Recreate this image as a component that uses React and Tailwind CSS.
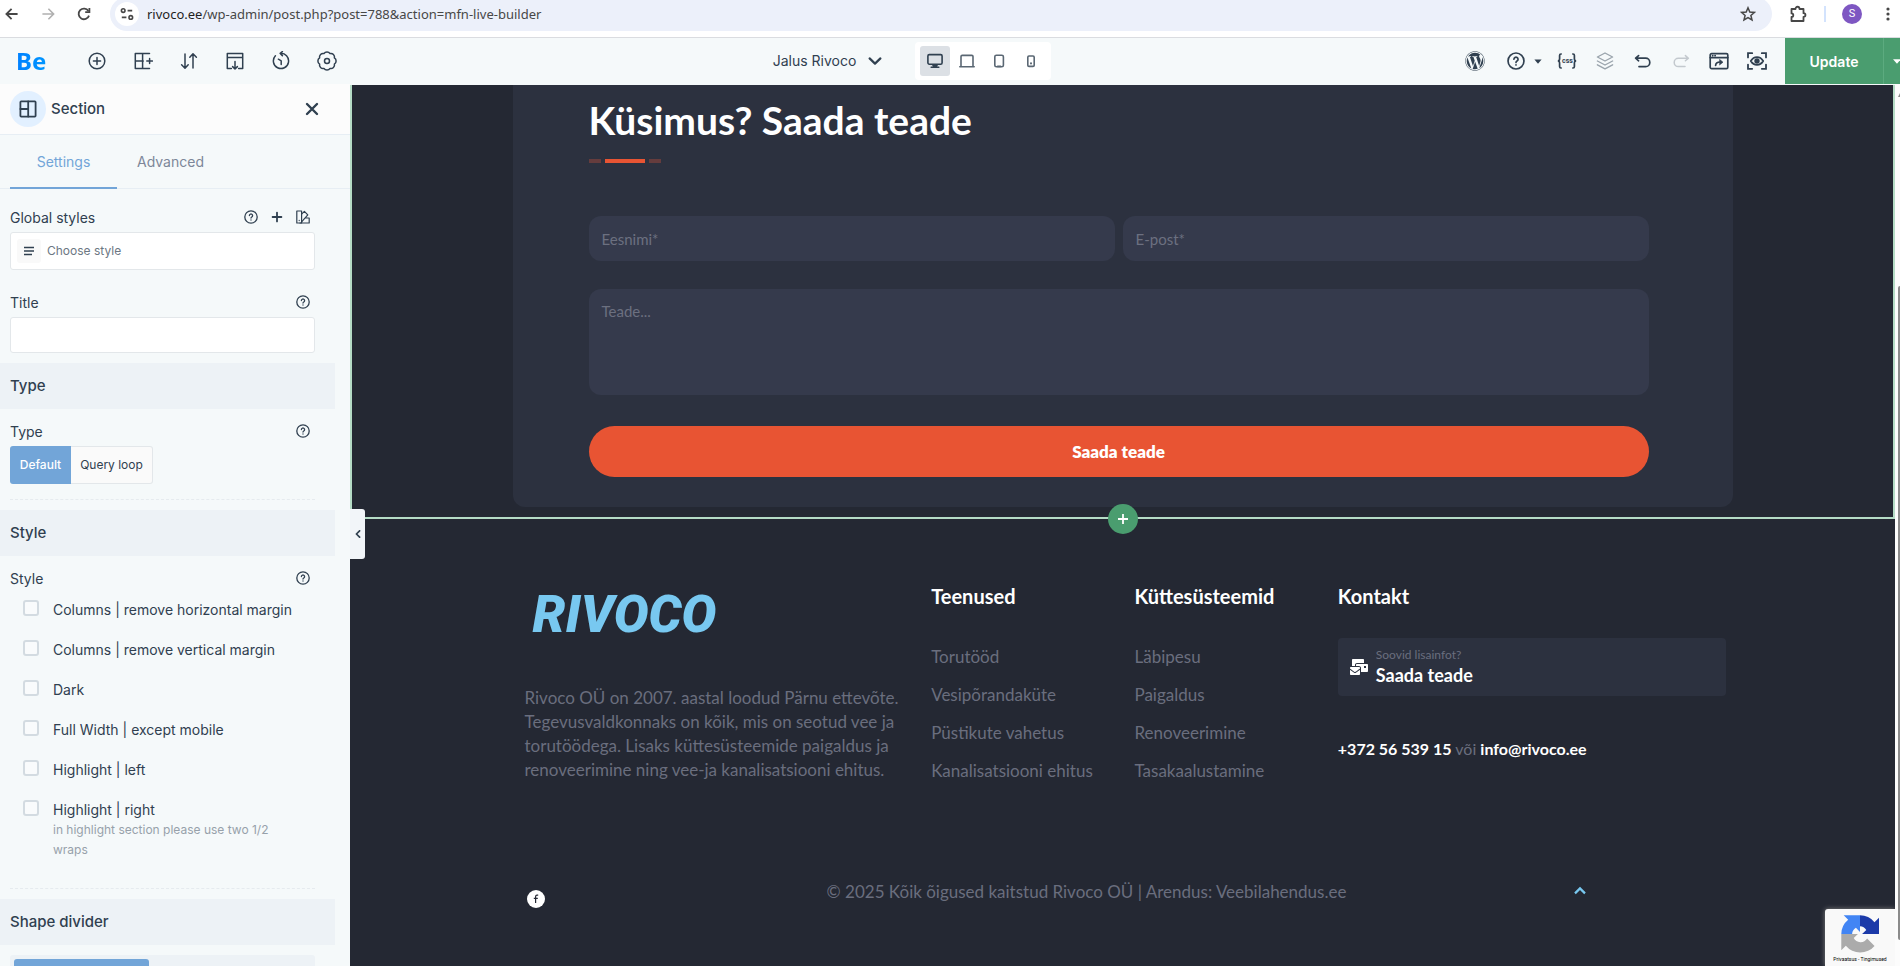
import React from "react";
import { FaWordpress, FaMailBulk } from "react-icons/fa";

function Icon({ size = 20, box = 20, stroke = 1.6, className = "", children }) {
  return (
    <svg
      width={size}
      height={size}
      viewBox={`0 0 ${box} ${box}`}
      fill="none"
      stroke="currentColor"
      strokeWidth={stroke}
      strokeLinecap="round"
      strokeLinejoin="round"
      className={`shrink-0 ${className}`}
      aria-hidden="true"
    >
      {children}
    </svg>
  );
}

function QuestionIcon({ size = 14 }) {
  return (
    <Icon size={size} box={14} stroke={1.3}>
      <circle cx="7" cy="7" r="6.2" />
      <path d="M5.4 5.6a1.6 1.6 0 1 1 2.4 1.4c-.5.3-.8.6-.8 1.1" />
      <path d="M7 9.9v.2" />
    </Icon>
  );
}

function BrowserBar() {
  return (
    <div className="flex h-[37px] w-full shrink-0 items-start overflow-hidden bg-white text-[#474747]">
      <div className="flex h-7 w-[110px] shrink-0 items-center justify-between pl-[5px] pr-[19px]">
        <button type="button" aria-label="Back">
          <Icon size={14} box={14} stroke={1.8}>
            <path d="M12.6 7H1.6M6.6 1.8 1.4 7l5.2 5.2" strokeLinecap="butt" strokeLinejoin="miter" />
          </Icon>
        </button>
        <button type="button" aria-label="Forward" className="text-[#b0b0b0]">
          <Icon size={14} box={14} stroke={1.6}>
            <path d="M1.4 7h11M7.4 1.8 12.6 7l-5.2 5.2" strokeLinecap="butt" strokeLinejoin="miter" />
          </Icon>
        </button>
        <button type="button" aria-label="Reload">
          <Icon size={14} box={14} stroke={1.8}>
            <path d="M12 8.6A5.3 5.3 0 1 1 11.4 4" strokeLinecap="butt" />
            <path d="M12.4.9v4.2H8.2" strokeLinecap="butt" strokeLinejoin="miter" />
          </Icon>
        </button>
      </div>
      <div className="-mt-[3px] flex h-[34px] min-w-0 flex-1 items-center rounded-full bg-[#ecf0fa] pl-[5px] pr-4">
        <button type="button" aria-label="Site information" className="mr-2 grid size-6 shrink-0 place-items-center rounded-full bg-white">
          <Icon size={14} box={14} stroke={1.6}>
            <circle cx="3.2" cy="3.6" r="1.8" />
            <path d="M7.6 3.6h4.6M1.8 10.4h4.6" strokeLinecap="butt" />
            <circle cx="10.8" cy="10.4" r="1.8" />
          </Icon>
        </button>
        <div className="min-w-0 flex-1 truncate font-['Noto_Sans',sans-serif] text-[13px] leading-5 text-[#474747]">
          <span className="text-[#1f1f1f]">rivoco.ee</span>/wp-admin/post.php?post=788&amp;action=mfn-live-builder
        </div>
        <button type="button" aria-label="Bookmark this page">
          <Icon size={16} box={16} stroke={1.5}>
            <path d="M8 1.8 9.8 6l4.6.4-3.5 3 1.1 4.5L8 11.5l-4 2.4 1.1-4.5-3.5-3L6.2 6z" strokeLinejoin="miter" />
          </Icon>
        </button>
      </div>
      <div className="flex h-7 w-32 shrink-0 items-center pl-[17px]">
        <button type="button" aria-label="Extensions">
          <Icon size={18} box={18} stroke={1.8}>
            <path d="M2.5 4h4c0-3 4-3 4 0h4v4.2c2.6 0 2.6 3.6 0 3.6V16h-12v-4c2.4-.2 2.4-3.4 0-3.6z" />
          </Icon>
        </button>
        <span className="ml-[17px] h-4 w-[2px] bg-[#d3e3fd]" />
        <button type="button" aria-label="Profile" className="ml-4 grid size-5 place-items-center rounded-full bg-[#7e57c2] font-[Roboto,sans-serif] text-[11px] text-white">
          S
        </button>
        <button type="button" aria-label="Browser menu" className="ml-6">
          <svg width="4" height="14" viewBox="0 0 4 14" fill="currentColor" aria-hidden="true">
            <circle cx="2" cy="2" r="1.6" />
            <circle cx="2" cy="7" r="1.6" />
            <circle cx="2" cy="12" r="1.6" />
          </svg>
        </button>
      </div>
    </div>
  );
}

const leftTools = [
  ["Add element", <><circle cx="10" cy="10" r="7.8" /><path d="M10 6.4v7.2M6.4 10h7.2" /></>],
  ["Prebuilt sections", <><path d="M16.5 2.6H2.3v14.8h14.2M2.3 10h8M9.6 2.6v14.8M16.6 7.4v5.2M13.800 10h5.600" /></>],
  ["Reorder", <><path d="M6 3v14M2.6 13.8 6 17.2l3.200-3.400M14 17V3M10.800 6.200 14 2.800l3.400 3.400" /></>],
  ["Single page import", <><path d="M6.4 17.4H2.3V2.6h15.4v14.8h-4.1M2.3 6.4h15.4M10 10.4v7.4M7.6 15.6l2.4 2.4 2.4-2.400" /></>],
  ["Revisions", <><path d="M4.4 4.8a7.6 7.6 0 1 0 4.8-2.4M9.2 2.4 11.4.6M9.2 2.4l2.2 2.2M7.4 8.2l2.8 1.6v3.6" /></>],
  ["Settings", <><circle cx="10" cy="10" r="2.5" /><path d="M17.4 6.940A3.6 3.6 0 0 1 17.4 13.060 3.6 3.6 0 0 1 13.060 17.400 3.6 3.6 0 0 1 6.940 17.400 3.6 3.6 0 0 1 2.6 13.060 3.6 3.6 0 0 1 2.6 6.940 3.6 3.6 0 0 1 6.940 2.600 3.6 3.6 0 0 1 13.060 2.600 3.6 3.6 0 0 1 17.4 6.940z" /></>],
];

function EditorBar() {
  return (
    <header className="flex h-[47px] w-full shrink-0 items-center border-t border-[#dadce0] bg-[#f5f9fa] text-[#304050]">
      <div className="flex flex-1 items-center">
        <a href="#be" className="ml-4 w-[71px] bg-gradient-to-r from-[#0080ff] to-[#00b2ff] bg-clip-text font-['Noto_Sans',sans-serif] text-[24px] leading-[46px] font-bold text-transparent">
          Be
        </a>
        <div className="flex gap-[26px]">
          {leftTools.map(([label, art]) => (
            <button key={label} type="button" aria-label={label}>
              <Icon stroke={1.5}>{art}</Icon>
            </button>
          ))}
        </div>
      </div>

      <div className="mr-[76px] flex items-center">
        <button type="button" className="mr-[33px] flex items-center gap-3 font-[Inter,sans-serif] text-[14px] leading-5">
          Jalus Rivoco
          <Icon size={14} box={14} stroke={2.2}>
            <path d="M1.6 4.4 7 9.6l5.4-5.2" />
          </Icon>
        </button>
        <div className="flex h-[38px] items-center gap-[2px] rounded bg-white px-[5px]">
          <button type="button" aria-label="Desktop" className="grid size-[30px] place-items-center rounded-[3px] bg-[#dce0e5]">
            <Icon size={16} box={16} stroke={1.6}>
              <rect x=".9" y="1.6" width="14.2" height="9.6" rx="1.4" />
              <path d="M6 12.6h4M4.2 14.2h7.6" />
            </Icon>
          </button>
          <button type="button" aria-label="Laptop" className="grid size-[30px] place-items-center text-[#5a6773]">
            <Icon size={16} box={16} stroke={1.6}>
              <path d="M2 13V3.6c0-.8.4-1.2 1.2-1.2h9.6c.8 0 1.2.4 1.2 1.2V13M.8 13.8h14.4" />
            </Icon>
          </button>
          <button type="button" aria-label="Tablet" className="grid size-[30px] place-items-center text-[#5a6773]">
            <Icon size={16} box={16} stroke={1.6}>
              <rect x="3.8" y="2.2" width="8.6" height="11.6" rx="1.6" />
              <path d="M6.6 13.4h3" />
            </Icon>
          </button>
          <button type="button" aria-label="Phone" className="grid size-[30px] place-items-center text-[#5a6773]">
            <Icon size={16} box={16} stroke={1.6}>
              <rect x="4.8" y="3" width="6.4" height="10.4" rx="1.2" />
              <path d="M8 10.2v.2" strokeWidth="2" />
            </Icon>
          </button>
        </div>
      </div>

      <div className="flex flex-1 items-center justify-end self-stretch">
        <div className="mr-[18px] flex items-center gap-[18px]">
          <button type="button" aria-label="WordPress" className="mr-1"><FaWordpress size={20} /></button>
          <button type="button" aria-label="Help" className="flex items-center gap-[9px]">
            <QuestionIcon size={18} />
            <svg width="8" height="5" viewBox="0 0 8 5" fill="currentColor" aria-hidden="true"><path d="M.4.4h7.2L4 4.8z" /></svg>
          </button>
          <button type="button" aria-label="Custom CSS" className="-ml-[3px] flex items-center font-[Roboto,sans-serif]">
            <svg width="5" height="16" viewBox="0 0 5 16" fill="none" stroke="currentColor" strokeWidth="1.7" aria-hidden="true">
              <path d="M4.800 1H4C3 1 2.600 1.500 2.600 2.500v3.300C2.600 7.200 2 8 .8 8c1.200 0 1.800.8 1.800 2.200v3.300c0 1 .4 1.500 1.400 1.500h.8" />
            </svg>
            <span className="w-[10px] text-center text-[7px] leading-4 font-bold">css</span>
            <svg width="5" height="16" viewBox="0 0 5 16" fill="none" stroke="currentColor" strokeWidth="1.7" aria-hidden="true">
              <path d="M.2 1H1c1 0 1.400.5 1.400 1.500v3.300C2.400 7.200 3 8 4.200 8c-1.200 0-1.800.8-1.800 2.200v3.300c0 1-.4 1.500-1.400 1.500H.2" />
            </svg>
          </button>
          <button type="button" aria-label="Navigator" className="text-[#9aa4ac]">
            <Icon stroke={1.4}>
              <path d="M10 2 17.6 6 10 10 2.4 6zM2.4 10l7.6 4 7.6-4M2.4 13.8l7.6 4 7.6-4" />
            </Icon>
          </button>
          <button type="button" aria-label="Undo">
            <Icon stroke={1.7}><path d="M5.6 4.6 2.6 7.2l3 2.6M3 7.2h9.6a4.2 4.2 0 0 1 0 8.4H6" /></Icon>
          </button>
          <button type="button" aria-label="Redo" className="text-[#c3c9ce]">
            <Icon stroke={1.5}><path d="m14.4 4.6 3 2.6-3 2.6M17 7.2H7.4a4.2 4.2 0 0 0 0 8.4H14" /></Icon>
          </button>
          <button type="button" aria-label="Preview">
            <Icon stroke={1.7}>
              <rect x="1.2" y="2.6" width="17.6" height="15" rx="1.4" />
              <path d="M1.2 6.6h17.6M3.6 4.6h.2M6 4.6h.2" />
              <path d="M6.6 14.4c.2-2.4 1.6-3.4 4.6-3.4" />
              <path d="m10.8 8.6 3.2 2.6-3.2 2.6z" fill="currentColor" strokeWidth=".6" />
            </Icon>
          </button>
          <button type="button" aria-label="View page">
            <Icon stroke={1.8}>
              <path d="M1 6.4V2.2h4.2M14.8 2.2H19v4.2M19 13.6v4.2h-4.2M5.2 17.8H1v-4.2" strokeLinejoin="miter" />
              <path d="M3.8 10c1.6-2.6 3.6-3.9 6.2-3.9s4.6 1.3 6.2 3.9c-1.6 2.6-3.6 3.9-6.2 3.9S5.4 12.6 3.8 10z" />
              <circle cx="10" cy="10" r="1.8" fill="currentColor" />
            </Icon>
          </button>
        </div>
        <button type="button" className="h-full w-[98px] bg-[#4a9d6f] font-[Inter,sans-serif] text-[14px] font-semibold text-white">
          Update
        </button>
        <button type="button" aria-label="More update options" className="flex h-full w-[17px] items-center justify-end overflow-hidden border-l border-[#5cab7f] bg-[#4a9d6f] text-white">
          <svg width="7" height="5" viewBox="0 0 7 5" fill="currentColor" aria-hidden="true"><path d="M0 .2h8L4 4.8z" /></svg>
        </button>
      </div>
    </header>
  );
}

function Band({ children }) {
  return <h3 className="h-[46px] w-[335px] bg-[#edf2f6] pl-[10px] text-[15px] leading-[46px] font-medium">{children}</h3>;
}

function HelpButton() {
  return (
    <button type="button" aria-label="Help" className="block"><QuestionIcon /></button>
  );
}

const styleOptions = [
  "Columns | remove horizontal margin",
  "Columns | remove vertical margin",
  "Dark",
  "Full Width | except mobile",
  "Highlight | left",
  "Highlight | right",
];

function Sidebar() {
  return (
    <aside className="relative flex w-[350px] shrink-0 flex-col bg-[#f5f9fa] font-[Inter,sans-serif] text-[14px] text-[#304050]">
      <div className="flex h-[51px] shrink-0 items-center border-b border-[#e7eef4] bg-[#fcfcfc] pl-[10px] pr-[31px]">
        <span className="grid size-9 place-items-center rounded-full bg-[#e2f0ff]">
          <Icon size={18} box={18} stroke={1.8}>
            <rect x="1.4" y="1.4" width="15.2" height="15.2" rx=".8" />
            <path d="M9.2 1.4v15.2M1.4 9h7.8" />
          </Icon>
        </span>
        <h2 className="ml-[5px] flex-1 text-[15px] font-medium">Section</h2>
        <button type="button" aria-label="Close">
          <Icon size={14} box={14} stroke={2.4}><path d="m2 2 10 10M12 2 2 12" /></Icon>
        </button>
      </div>
      <div className="flex h-[54px] shrink-0 border-b border-[#e7eef4] pl-[10px]">
        <button type="button" className="-mb-px w-[107px] border-b-2 border-[#72a5d8] text-[#72a5d8]">Settings</button>
        <button type="button" className="w-[107px] text-[#7d8799]">Advanced</button>
      </div>

      <div className="flex-1 overflow-hidden">
        <div className="w-[315px] pl-[10px] pt-[18px]">
          <div className="flex h-5 items-center justify-between pr-[5px]">
            <label htmlFor="global-style">Global styles</label>
            <div className="flex items-center gap-[13px]">
              <HelpButton />
              <button type="button" aria-label="Add style">
                <Icon size={12} box={12} stroke={1.8}><path d="M6 1.6v8.8M1.6 6h8.8" /></Icon>
              </button>
              <button type="button" aria-label="Style library">
                <Icon size={14} box={14} stroke={1.2}>
                  <path d="M.8 1h4.8v12H.8zM3.2 10.4v.2" />
                  <path d="M5.6 4.2 8.4 1.4l3.4 3.4L5.6 11.8M9.4 8h3.8v5H4" />
                </Icon>
              </button>
            </div>
          </div>
          <div className="mt-[5px] flex h-[38px] items-center rounded-[3px] border border-[#e3e7ea] bg-white pl-[6px]">
            <span className="grid size-6 place-items-center rounded-[3px] bg-[#f9f9f9]">
              <Icon size={12} box={12} stroke={1.6}>
                <path d="M1 2.500h10M1 6h10M1 9.500h8" strokeLinecap="butt" />
              </Icon>
            </span>
            <select id="global-style" className="ml-[6px] h-full flex-1 appearance-none bg-transparent text-[12px] text-[#6c7783]">
              <option>Choose style</option>
            </select>
          </div>

          <div className="mt-[22px] flex h-5 items-center justify-between pr-[5px]">
            <label htmlFor="section-title">Title</label>
            <HelpButton />
          </div>
          <input id="section-title" type="text" className="mt-[5px] block h-9 w-full rounded-[3px] border border-[#e3e7ea] bg-white px-2" />
        </div>

        <div className="mt-[10px]"><Band>Type</Band></div>
        <div className="w-[315px] pl-[10px] pt-[12px]">
          <div className="flex h-5 items-center justify-between pr-[5px]">
            <span>Type</span>
            <HelpButton />
          </div>
          <div className="mt-[5px] flex h-[38px]">
            <button type="button" aria-pressed="true" className="w-[61px] rounded-l-[3px] bg-[#72a5d8] text-[12px] font-medium text-white">Default</button>
            <button type="button" aria-pressed="false" className="w-[82px] rounded-r-[3px] border border-l-0 border-[#e3e7ea] bg-[#fafafa] text-[12px]">Query loop</button>
          </div>
          <div className="mt-[15px] border-b border-dashed border-[#e6ebef]" />
        </div>

        <div className="mt-[10px]"><Band>Style</Band></div>
        <div className="w-[315px] pl-[10px] pt-[12px]">
          <div className="flex h-5 items-center justify-between pr-[5px]">
            <span>Style</span>
            <HelpButton />
          </div>
          <div className="mt-3 flex flex-col gap-5 pl-[13px]">
            {styleOptions.map((name) => (
              <label key={name} className="flex h-5 items-start gap-[14px] leading-5">
                <input type="checkbox" className="size-4 shrink-0 appearance-none rounded-[3px] border-2 border-[#d3dbe1] bg-[#f9fbfc]" />
                {name}
              </label>
            ))}
          </div>
          <p className="pl-[43px] pr-6 text-[12px] leading-5 text-[#97a1aa]">in highlight section please use two 1/2 wraps</p>
          <div className="mt-[28px] border-b border-dashed border-[#e6ebef]" />
        </div>

        <div className="mt-[10px]"><Band>Shape divider</Band></div>
        <div className="ml-[10px] mt-[10px] flex h-11 w-[305px] rounded-[3px] bg-[#edf2f6] p-1">
          <button type="button" aria-label="Top divider" className="w-[135px] rounded-[3px] bg-[#72a5d8]" />
        </div>
      </div>

      <button type="button" aria-label="Collapse panel" className="absolute left-full top-[425px] z-10 grid h-[50px] w-[15px] place-items-center rounded-r-[3px] bg-[#f2f5f9]">
        <Icon size={8} box={8} stroke={1.7}><path d="M5.6.8 2.400 4l3.200 3.200" /></Icon>
      </button>
    </aside>
  );
}

const fieldClass =
  "block w-full resize-none rounded-xl bg-[#353a4c] px-[13px] text-[15px] text-white placeholder:text-[#6c7080] outline-none";

function ContactSection() {
  return (
    <section className="relative border-x-2 border-b-2 border-[#b5dcc6] pb-[10px]">
      <div className="mx-auto w-full max-w-[1220px] rounded-b-xl bg-[#2c313f] pl-[76px] pr-[84px] pb-[30px] pt-[11px]">
        <h1 className="text-[39px] leading-[48px] font-bold text-white">Küsimus? Saada teade</h1>
        <div className="mt-[15px] flex gap-1">
          <span className="h-1 w-3 bg-[#653c3d]" />
          <span className="h-1 w-10 bg-[#e85433]" />
          <span className="h-1 w-3 bg-[#653c3d]" />
        </div>
        <form className="mt-[53px]">
          <div className="grid grid-cols-2 gap-2">
            <input type="text" aria-label="Eesnimi" placeholder="Eesnimi*" className={`${fieldClass} h-[45px]`} />
            <input type="email" aria-label="E-post" placeholder="E-post*" className={`${fieldClass} h-[45px]`} />
          </div>
          <textarea aria-label="Teade" placeholder="Teade..." className={`${fieldClass} mt-7 h-[106px] pt-[11px]`} />
          <button type="button" className="mt-[31px] h-[51px] w-full rounded-full bg-[#e85433] text-[17px] font-extrabold text-white">
            Saada teade
          </button>
        </form>
      </div>
      <button type="button" aria-label="Add section" className="absolute -bottom-[17px] left-1/2 z-10 grid size-[30px] -translate-x-1/2 place-items-center rounded-full bg-[#4a9d6f] text-white">
        <Icon size={12} box={12} stroke={1.8}><path d="M6 1v10M1 6h10" strokeLinecap="butt" /></Icon>
      </button>
    </section>
  );
}

function LinkColumn({ title, items }) {
  return (
    <nav className="px-3">
      <h4 className="text-[20px] leading-[26px] font-bold text-white">{title}</h4>
      <ul className="mt-[35px] flex flex-col gap-3">
        {items.map((item) => (
          <li key={item} className="h-[26px] leading-[26px] whitespace-nowrap">
            <a href="#teenused">{item}</a>
          </li>
        ))}
      </ul>
    </nav>
  );
}

function Footer() {
  return (
    <footer className="mx-auto w-full max-w-[1220px] text-[17px] text-[#6a6e7e]">
      <div className="grid grid-cols-6 pt-[64px]">
        <div className="col-span-2 px-3">
          <a href="#rivoco" className="block h-[64px] pl-[8px] font-[Roboto,sans-serif] text-[52px] leading-[64px] font-black text-[#78c8f0] italic">
            RIVOCO
          </a>
          <p className="mt-[39px] leading-6">
            Rivoco OÜ on 2007. aastal loodud Pärnu ettevõte. Tegevusvaldkonnaks on kõik, mis on seotud vee ja torutöödega. Lisaks küttesüsteemide paigaldus ja renoveerimine ning vee-ja kanalisatsiooni ehitus.
          </p>
        </div>
        <LinkColumn title="Teenused" items={["Torutööd", "Vesipõrandaküte", "Püstikute vahetus", "Kanalisatsiooni ehitus"]} />
        <LinkColumn title="Küttesüsteemid" items={["Läbipesu", "Paigaldus", "Renoveerimine", "Tasakaalustamine"]} />
        <div className="col-span-2 pl-3 pr-[6px]">
          <h4 className="text-[20px] leading-[26px] font-bold text-white">Kontakt</h4>
          <a href="#kontakt" className="mt-[29px] flex h-[58px] items-center gap-2 rounded bg-[#2c313f] pl-3">
            <FaMailBulk size={18} className="text-white" />
            <span className="flex flex-col">
              <span className="text-[12px] leading-4">Soovid lisainfot?</span>
              <span className="text-[18px] leading-6 font-bold text-white">Saada teade</span>
            </span>
          </a>
          <p className="mt-[40px] text-[16px] leading-[26px]">
            <a href="tel:+3725653915" className="font-bold text-white">+372 56 539 15</a> või{" "}
            <a href="mailto:info@rivoco.ee" className="font-bold text-white">info@rivoco.ee</a>
          </p>
        </div>
      </div>
      <div className="flex items-start pl-[14px] pr-[146px] pt-[95px]">
        <a href="#facebook" aria-label="Facebook" className="mt-[11px]">
          <svg width="18" height="18" viewBox="0 0 18 18" aria-hidden="true">
            <circle cx="9" cy="9" r="9" fill="#fff" />
            <path d="M11.2 5.2H10q-1.4 0-1.4 1.6V13M6.8 8.4h4" fill="none" stroke="#242833" strokeWidth="1.2" />
          </svg>
        </a>
        <p className="flex-1 pl-14 text-center leading-[26px]">© 2025 Kõik õigused kaitstud Rivoco OÜ | Arendus: Veebilahendus.ee</p>
        <button type="button" aria-label="Back to top" className="mt-[5px] text-[#78c8f0]">
          <Icon size={14} box={14} stroke={2.2}><path d="m2 9.4 5-5 5 5" strokeLinecap="butt" strokeLinejoin="miter" /></Icon>
        </button>
      </div>
    </footer>
  );
}

function Recaptcha() {
  return (
    <div className="absolute bottom-0 right-0 flex h-[57px] w-[70px] flex-col items-center rounded-tl-[3px] bg-[#f9f9f9] pt-[6px] shadow-[0_0_5px_#808080]">
      <svg width="38" height="38" viewBox="0 0 64 64" aria-hidden="true">
        <path d="M64 32V4.5l-7.6 7.6A31.6 31.6 0 0 0 32 .5v18.3a13 13 0 0 1 10.600 6.300L35.500 32z" fill="#1c3aa9" />
        <path d="M32 .5H4.5l7.6 7.6A31.6 31.6 0 0 0 .5 32h18.2a13 13 0 0 1 6.4-10.600L32 28.500z" fill="#4285f4" />
        <path d="M.5 32v27.5l7.6-7.6A31.6 31.6 0 0 0 56.5 52L44 39.600a13 13 0 0 1-22.600-.7L28.500 32z" fill="#ababab" />
      </svg>
      <p className="mt-[2px] whitespace-nowrap font-[Roboto,sans-serif] text-[5px] leading-2 text-black">Privaatsus - Tingimused</p>
    </div>
  );
}

export default function App() {
  return (
    <div className="flex h-screen flex-col overflow-hidden">
      <BrowserBar />
      <EditorBar />
      <div className="flex min-h-0 flex-1">
        <Sidebar />
        <main className="relative min-w-0 flex-1 overflow-hidden border-t border-[#f5f9fa] bg-[#242833] font-[Lato,sans-serif]">
          <ContactSection />
          <Footer />
          <Recaptcha />
        </main>
        <div className="flex w-[5px] shrink-0 flex-col items-end bg-[#fcfcfc] pb-[26px] pt-[9px]">
          <svg width="2" height="4" viewBox="0 0 2 4" fill="#8b8b8b" aria-hidden="true"><path d="M2 0v4H0z" /></svg>
          <div className="mt-[189px] w-[2px] flex-1 rounded-l-sm bg-[#8b8b8b]" />
        </div>
      </div>
    </div>
  );
}
